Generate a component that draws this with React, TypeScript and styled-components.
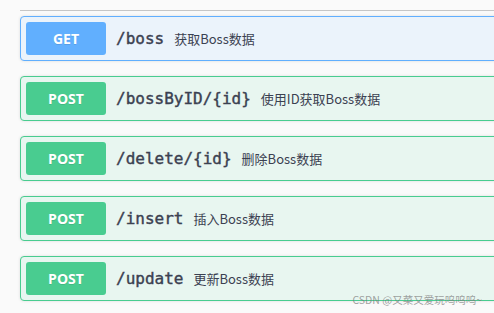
import React from "react";
import styled, { createGlobalStyle } from "styled-components";

type Method = "GET" | "POST";

type Endpoint = {
  method: Method;
  path: string;
  summary: string;
};

const endpoints: Endpoint[] = [
  { method: "GET", path: "/boss", summary: "获取Boss数据" },
  { method: "POST", path: "/bossByID/{id}", summary: "使用ID获取Boss数据" },
  { method: "POST", path: "/delete/{id}", summary: "删除Boss数据" },
  { method: "POST", path: "/insert", summary: "插入Boss数据" },
  { method: "POST", path: "/update", summary: "更新Boss数据" },
];

const palette: Record<Method, { main: string; bg: string }> = {
  GET: { main: "#61affe", bg: "#ebf3fb" },
  POST: { main: "#49cc90", bg: "#e8f6f0" },
};

const GlobalStyle = createGlobalStyle`
  html, body {
    margin: 0;
    padding: 0;
    background: #fafafa;
    overflow: hidden;
  }
  body {
    width: 494px;
    height: 313px;
  }
`;

const Page = styled.div`
  position: relative;
  width: 494px;
  height: 313px;
  padding: 10px 0 0 20px;
  box-sizing: border-box;
  overflow: hidden;
`;

const Divider = styled.div`
  height: 1px;
  background: #c6c6c6;
  margin: 0 -20px 5px 0;
`;

const List = styled.div`
  display: flex;
  flex-direction: column;
  gap: 15px;
  margin-right: -20px;
`;

const Block = styled.div<{ $method: Method }>`
  display: flex;
  align-items: center;
  height: 45px;
  box-sizing: border-box;
  padding: 0 5px;
  border: 1px solid ${(p) => palette[p.$method].main};
  background: ${(p) => palette[p.$method].bg};
  border-radius: 4px;
  box-shadow: 0 0 3px rgba(0, 0, 0, 0.12);
`;

const Badge = styled.span<{ $method: Method }>`
  display: flex;
  align-items: center;
  justify-content: center;
  width: 80px;
  height: 33px;
  flex-shrink: 0;
  border-radius: 3px;
  background: ${(p) => palette[p.$method].main};
  color: #fff;
  font-family: "Open Sans", "Liberation Sans", sans-serif;
  font-size: 14px;
  font-weight: 700;
  text-shadow: 0 1px 0 rgba(0, 0, 0, 0.1);
`;

const Path = styled.span`
  padding: 0 10px;
  font-family: "DejaVu Sans Mono", "Liberation Mono", monospace;
  font-size: 16px;
  font-weight: 400;
  -webkit-text-stroke: 0.4px #3b4151;
  color: #3b4151;
  white-space: nowrap;
`;

const Summary = styled.span`
  font-family: "Noto Sans CJK SC", "Noto Sans", sans-serif;
  font-size: 13px;
  color: #3b4151;
  white-space: nowrap;
`;

const Watermark = styled.span`
  position: absolute;
  right: 12px;
  bottom: 6px;
  font-family: "Noto Sans CJK SC", "Liberation Sans", sans-serif;
  font-size: 10.5px;
  color: rgba(120, 120, 120, 0.7);
  white-space: nowrap;
`;

export default function App() {
  return (
    <>
      <GlobalStyle />
      <Page>
        <Divider />
        <List>
          {endpoints.map((e) => (
            <Block key={e.path} $method={e.method}>
              <Badge $method={e.method}>{e.method}</Badge>
              <Path>{e.path}</Path>
              <Summary>{e.summary}</Summary>
            </Block>
          ))}
        </List>
        <Watermark>CSDN @又菜又爱玩呜呜呜~</Watermark>
      </Page>
    </>
  );
}
